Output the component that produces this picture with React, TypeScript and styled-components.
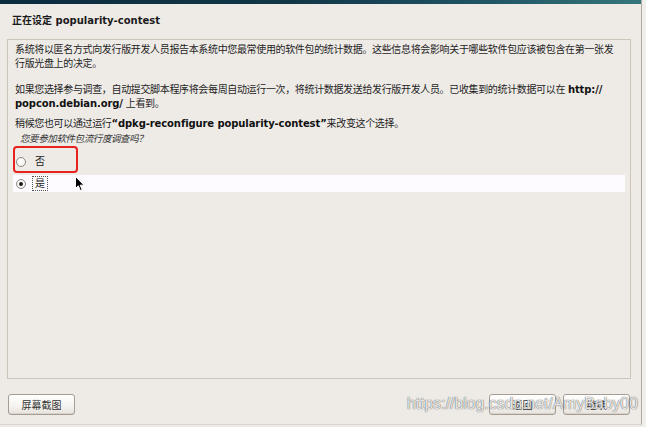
import React from 'react';
import styled, { createGlobalStyle } from 'styled-components';

const GlobalStyle = createGlobalStyle`
  html, body {
    margin: 0;
    padding: 0;
    background: #eeebe7;
  }
  * {
    box-sizing: border-box;
  }
`;

const FONT = `"DejaVu Sans", "Noto Sans CJK SC", sans-serif`;

const Screen = styled.div`
  position: relative;
  width: 646px;
  height: 427px;
  overflow: hidden;
  background: #eeebe7;
  display: flex;
  font-family: ${FONT};
`;

const Window = styled.div`
  width: 642px;
  height: 425px;
  display: flex;
  flex-direction: column;
  border-right: 1px solid #aeaaa4;
  border-bottom: 1px solid #d9d5cf;
`;

const TopBar = styled.div`
  height: 4px;
  flex: none;
  background: linear-gradient(90deg, #0c2c40 0%, #113648 45%, #1f5463 75%, #35767c 100%);
`;

const Title = styled.div`
  flex: none;
  height: 35px;
  padding: 10px 0 0 12px;
  font-size: 10px;
  line-height: 14px;
  font-weight: bold;
  color: #1a1a1a;
`;

const Panel = styled.div`
  flex: 1;
  margin: 0 10px 0 7px;
  border: 1px solid #cdc5ba;
  padding: 3px 5px 0 5px;
  display: flex;
  flex-direction: column;
`;

const Para = styled.p<{ $gap?: number }>`
  margin: 0 0 ${p => p.$gap ?? 0}px 0;
  padding-left: 2px;
  font-size: 10px;
  line-height: 14px;
  letter-spacing: -0.35px;
  color: #1e1e1e;
  white-space: nowrap;
`;

const Strong = styled.b`
  font-weight: bold;
  letter-spacing: -0.1px;
  color: #111;
`;

const Question = styled.div`
  padding-left: 7px;
  font-size: 9.5px;
  line-height: 15px;
  font-style: italic;
  letter-spacing: -0.4px;
  color: #333;
  margin-bottom: 7px;
`;

const OptionList = styled.div`
  display: flex;
  flex-direction: column;
  gap: 5px;
`;

const OptionRow = styled.div<{ $selected?: boolean }>`
  height: 17px;
  display: flex;
  align-items: center;
  gap: 6px;
  padding-left: 3px;
  background: ${p => (p.$selected ? '#fdfbff' : 'transparent')};
  font-size: 10px;
  color: #222;
`;

const Radio = styled.span<{ $checked?: boolean }>`
  position: relative;
  width: 10px;
  height: 10px;
  border-radius: 50%;
  border: 1px solid #8c8882;
  background: radial-gradient(circle at 40% 35%, #ffffff 0%, #f1efec 100%);
  &::after {
    content: '';
    display: ${p => (p.$checked ? 'block' : 'none')};
    position: absolute;
    left: 2px;
    top: 2px;
    width: 4px;
    height: 4px;
    border-radius: 50%;
    background: #1e1e1e;
  }
`;

const Label = styled.span<{ $focused?: boolean }>`
  padding: 0 2px;
  line-height: 13px;
  border: 1px dotted ${p => (p.$focused ? '#555' : 'transparent')};
`;

const Footer = styled.div`
  flex: none;
  height: 45px;
  padding: 15px 11px 0 8px;
  display: flex;
  align-items: flex-start;
`;

const Button = styled.button`
  width: 67px;
  height: 21px;
  padding: 0;
  border: 1px solid #a59d93;
  border-radius: 3px;
  background: linear-gradient(180deg, #ffffff 0%, #f6f4f1 55%, #e7e2dc 100%);
  font-family: ${FONT};
  font-size: 10px;
  color: #333;
  box-shadow: inset 0 -1px 0 #d9d3cb;
`;

const Spacer = styled.div`
  flex: 1;
`;

const ButtonGroup = styled.div`
  display: flex;
  gap: 7px;
`;

const RightStrip = styled.div`
  flex: 1;
  background: #f1efec;
`;

const Annotation = styled.div`
  position: absolute;
  left: 13px;
  top: 146px;
  width: 65px;
  height: 27px;
  border: 2px solid #e8231f;
  border-radius: 4px;
`;

const Cursor = styled.svg`
  position: absolute;
  left: 75px;
  top: 176px;
`;

const Watermark = styled.div`
  position: absolute;
  left: 407px;
  top: 396px;
  font-family: "Liberation Sans", Arial, sans-serif;
  font-size: 15.8px;
  line-height: 16px;
  color: rgba(255, 255, 255, 0.85);
  text-shadow: 0 0 1px rgba(70, 70, 70, 0.7), 0 0 1px rgba(70, 70, 70, 0.7);
  white-space: nowrap;
  pointer-events: none;
`;

export default function App() {
  return (
    <>
      <GlobalStyle />
      <Screen>
        <Window>
          <TopBar />
          <Title>正在设定 popularity-contest</Title>
          <Panel>
            <Para>
              系统将以匿名方式向发行版开发人员报告本系统中您最常使用的软件包的统计数据。这些信息将会影响关于哪些软件包应该被包含在第一张发
            </Para>
            <Para $gap={12}>行版光盘上的决定。</Para>
            <Para>
              如果您选择参与调查，自动提交脚本程序将会每周自动运行一次，将统计数据发送给发行版开发人员。已收集到的统计数据可以在{' '}
              <Strong>http://</Strong>
            </Para>
            <Para $gap={6}>
              <Strong>popcon.debian.org/</Strong> 上看到。
            </Para>
            <Para>
              稍候您也可以通过运行<Strong>“dpkg-reconfigure popularity-contest”</Strong>来改变这个选择。
            </Para>
            <Question>您要参加软件包流行度调查吗？</Question>
            <OptionList>
              <OptionRow>
                <Radio />
                <Label>否</Label>
              </OptionRow>
              <OptionRow $selected>
                <Radio $checked />
                <Label $focused>是</Label>
              </OptionRow>
            </OptionList>
          </Panel>
          <Footer>
            <Button>屏幕截图</Button>
            <Spacer />
            <ButtonGroup>
              <Button>返回</Button>
              <Button>继续</Button>
            </ButtonGroup>
          </Footer>
        </Window>
        <RightStrip />
        <Annotation />
        <Cursor width="10" height="16" viewBox="0 0 10 16">
          <path
            d="M0.5 0.5 L0.5 12.5 L3.3 9.8 L5.4 14.6 L7.2 13.8 L5.2 9.2 L9 9.2 Z"
            fill="#000"
            stroke="#fff"
            strokeWidth="1"
            strokeLinejoin="round"
          />
        </Cursor>
        <Watermark>https://blog.csdn.net/AmyBaby00</Watermark>
      </Screen>
    </>
  );
}
